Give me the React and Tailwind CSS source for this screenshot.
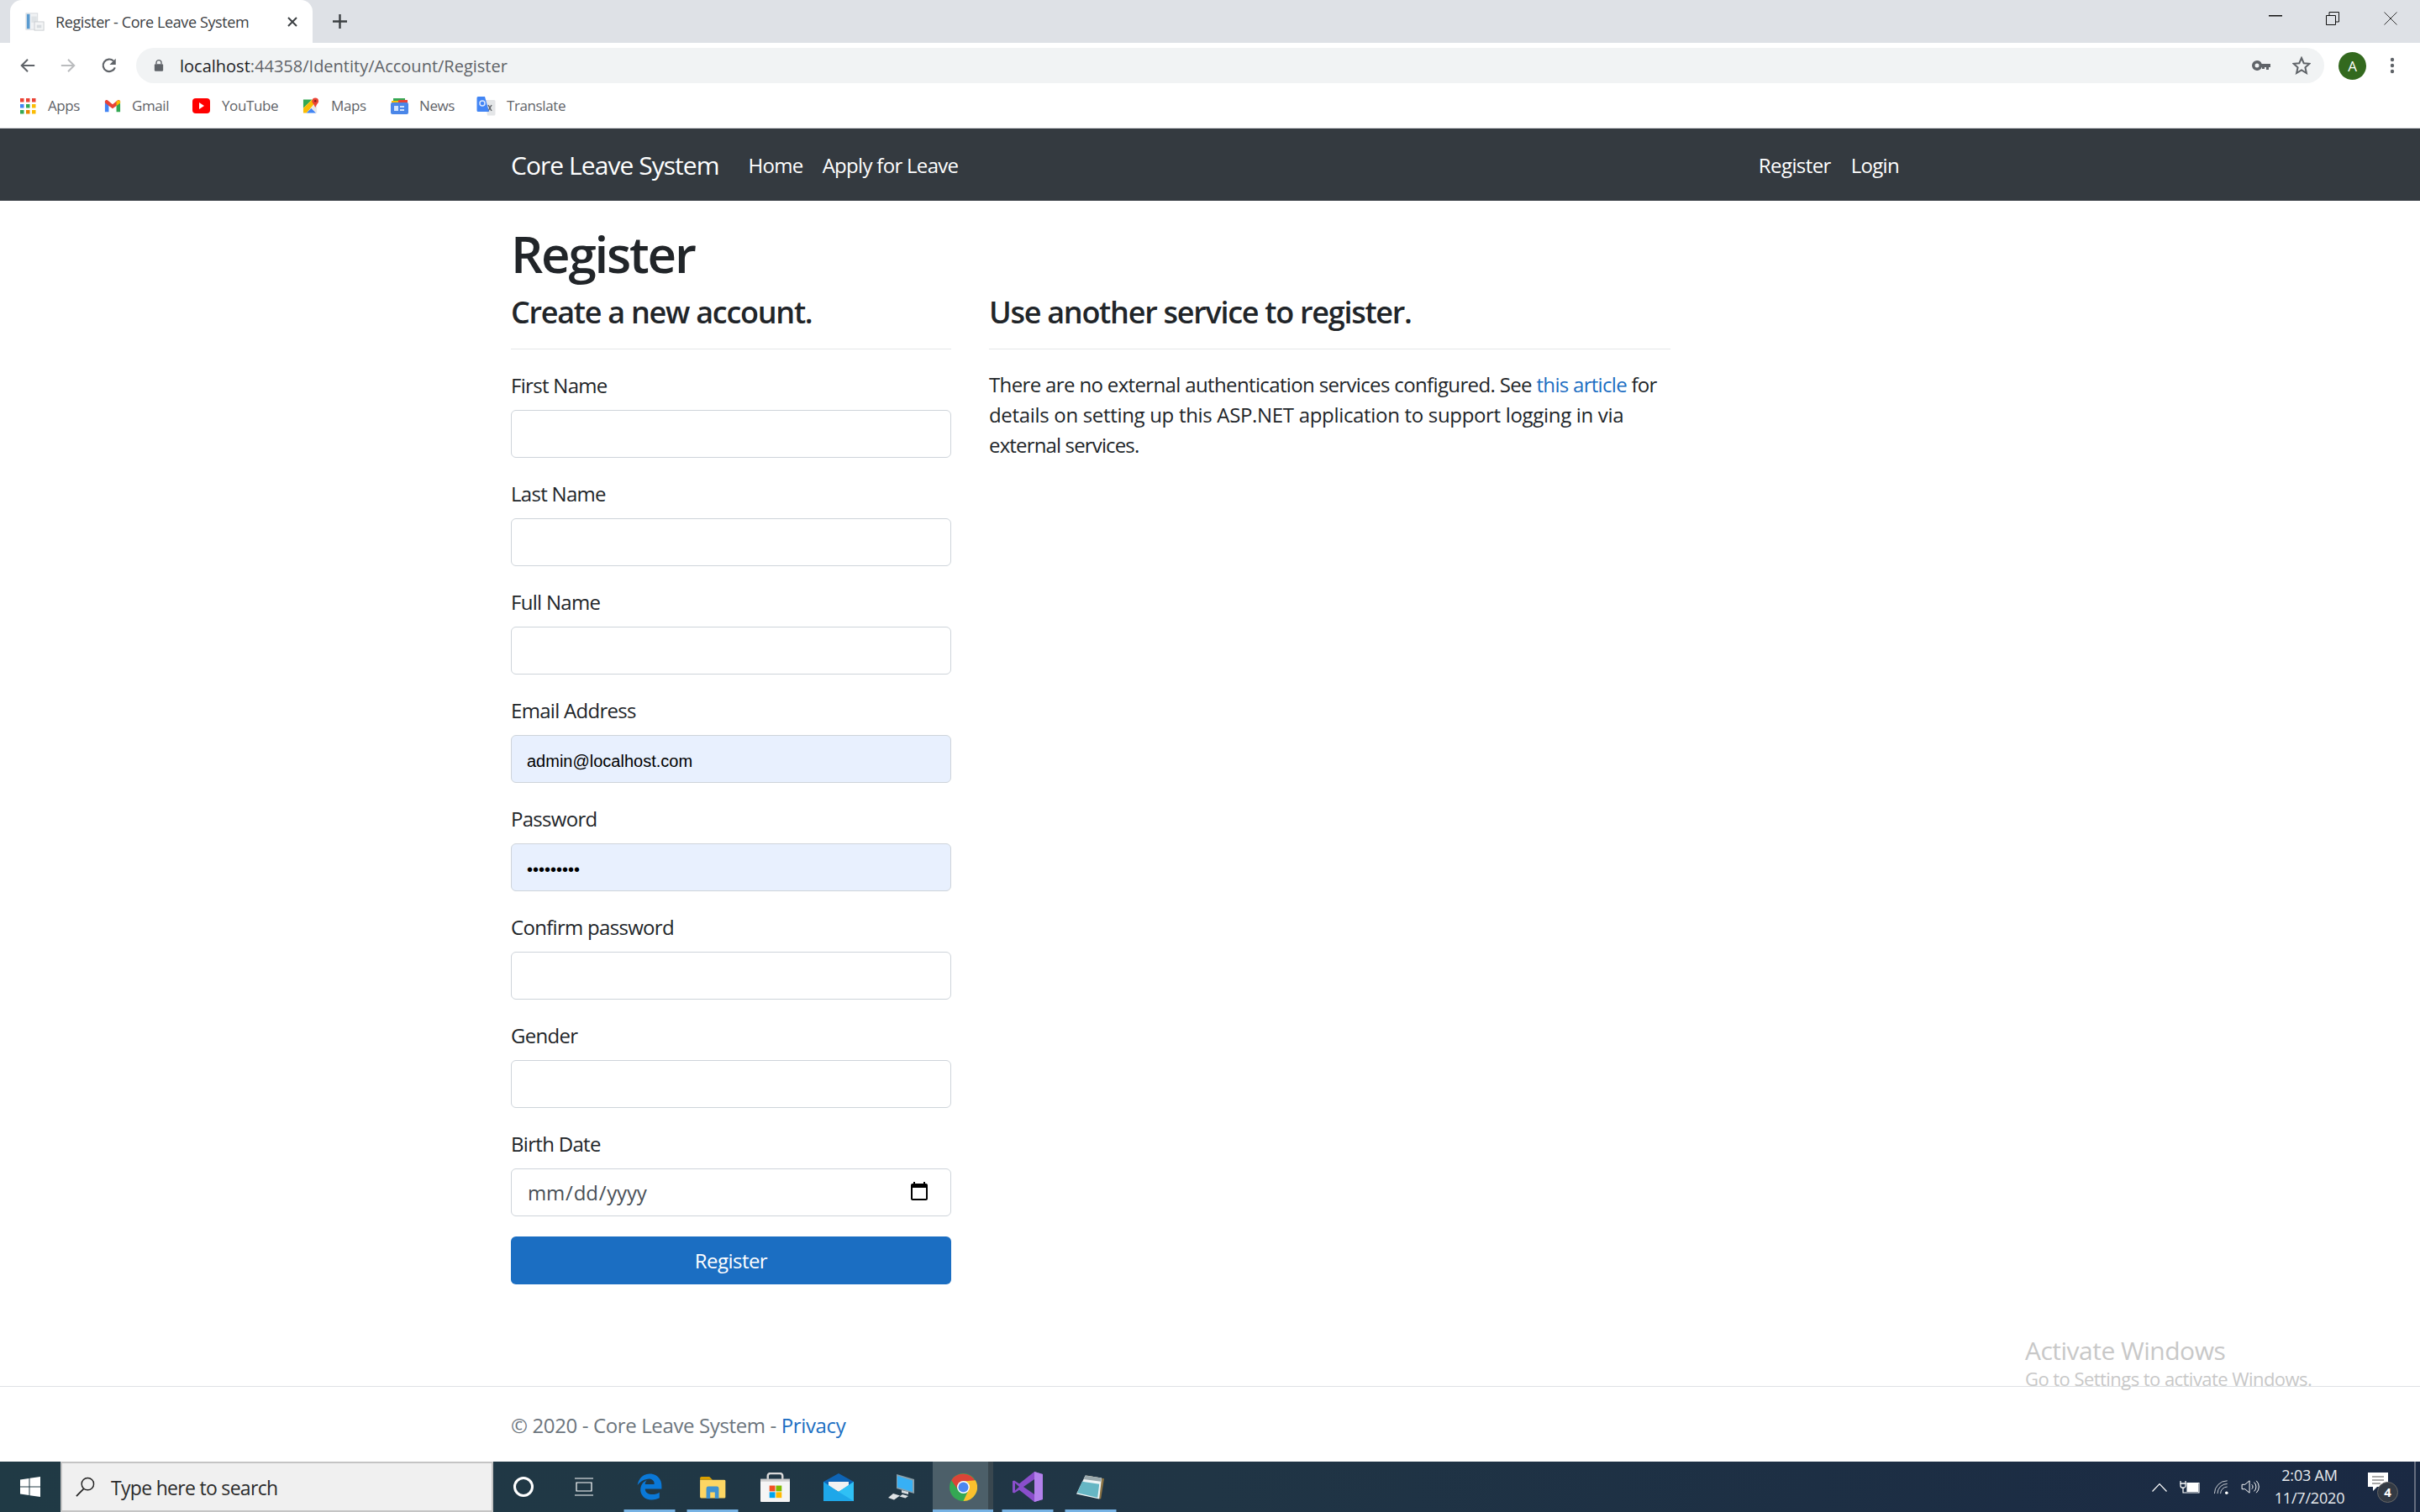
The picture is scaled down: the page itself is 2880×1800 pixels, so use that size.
import React from "react";
import { FaEdgeLegacy } from "react-icons/fa6";

const Field = ({ label, children }) => (
  <div className="mb-6">
    <label className="block h-9 mb-3 pt-px text-[#212529]">{label}</label>
    {children}
  </div>
);
const inputCls = "block w-full h-[57px] border border-[#ced4da] rounded-[6px] bg-white px-[18px] outline-none";

const Bookmark = ({ icon, label, iconW, textW }) => (
  <div className="flex items-center shrink-0">
    <div className="flex justify-center items-center" style={{ width: iconW }}>{icon}</div>
    <span className="text-[17px] text-[#5f6368] tracking-[-0.4px]" style={{ width: textW }}>{label}</span>
  </div>
);

const AppsIcon = () => (
  <svg width="20" height="20" viewBox="0 0 20 20">
    {[["#ea4335","#ea4335","#ea4335"],["#4285f4","#34a853","#fbbc05"],["#34a853","#ea8600","#fbbc05"]].map((row,i)=>row.map((c,j)=>(
      <rect key={i+"-"+j} x={1+j*7} y={1+i*7} width="4.5" height="4.5" fill={c}/>
    )))}
  </svg>
);
const GmailIcon = () => (
  <svg width="22" height="18" viewBox="0 0 22 18">
    <path d="M1 17V3l5 4v10z" fill="#4285f4"/>
    <path d="M21 17V3l-5 4v10z" fill="#34a853"/>
    <path d="M1 3c1-2 3-2 4-1l6 5 6-5c1-1 3-1 4 1v2l-5 4-5 3.500-5-3.500-5-4z" fill="#ea4335"/>
    <path d="M16 3l3-1.500c1 0 2 1 2 2v2l-5 3.500z" fill="#fbbc05"/>
  </svg>
);
const YoutubeIcon = () => (
  <svg width="21" height="18" viewBox="0 0 21 18">
    <rect width="21" height="18" rx="4" fill="#f00"/>
    <path d="M8 5l6 4-6 4z" fill="#fff"/>
  </svg>
);
const MapsIcon = () => (
  <svg width="21" height="22" viewBox="0 0 21 22">
    <path d="M1 3h11L1 14z" fill="#34a853"/>
    <path d="M1 14 12 3l4 4L5 20H1z" fill="#fbbc05"/>
    <path d="M5 20l6-6 6 6z" fill="#4285f4"/>
    <path d="M11 14l4-5 3 3v8h-1z" fill="#e8e8e8"/>
    <circle cx="16" cy="5" r="4" fill="#ea4335"/>
    <path d="M13 7l3 6 3-6z" fill="#ea4335"/>
    <circle cx="16" cy="5" r="1.300" fill="#7a2018"/>
  </svg>
);
const NewsIcon = () => (
  <svg width="23" height="23" viewBox="0 0 23 23">
    <path d="M4 3h14v6H4z" fill="#34a853"/>
    <path d="M2 6h12v6H2z" fill="#fbbc05"/>
    <path d="M10 5h11v8H10z" fill="#ea4335"/>
    <rect x="1" y="8" width="21" height="14" rx="2" fill="#4a86e8"/>
    <rect x="5" y="12" width="5" height="6" fill="#d2e3fc"/>
    <rect x="12" y="12" width="5" height="2" fill="#d2e3fc"/>
    <rect x="12" y="16" width="5" height="2" fill="#d2e3fc"/>
  </svg>
);
const TranslateIcon = () => (
  <svg width="23" height="24" viewBox="0 0 23 24">
    <path d="M10 5h11a1.500 1.500 0 0 1 1.500 1.500V22a1.500 1.500 0 0 1-1.500 1.500H13z" fill="#e4e6e8"/>
    <path d="M14 11l4 7M18 11l-4 7" stroke="#5f6368" strokeWidth="1.500"/>
    <path d="M2 1h8l5 18H2a1.500 1.500 0 0 1-1.500-1.500V2.500A1.500 1.500 0 0 1 2 1z" fill="#4285f4"/>
    <circle cx="7" cy="9" r="3" fill="none" stroke="#dbe7fd" strokeWidth="1.500"/>
  </svg>
);
const Favicon = () => (
  <svg width="23" height="23" viewBox="0 0 25 25">
    <rect x="1" y="2" width="15" height="21" fill="#f0f2f4" stroke="#d5d8dc"/>
    <rect x="2" y="3" width="4" height="19" fill="#5a9bd0"/>
    <rect x="8" y="6" width="7" height="8" fill="#dfe3e6"/>
    <rect x="12" y="13" width="12" height="11" fill="#f4f5f6" stroke="#c8ccd0"/>
    <rect x="15" y="17" width="6" height="4" fill="#d7dbdf"/>
  </svg>
);

const Cell = ({ w = 75, bar, children }) => (
  <div className="relative h-full flex items-center justify-center shrink-0" style={{ width: w }}>
    {children}
    {bar && <span className="absolute bottom-0 left-1/2 -translate-x-1/2 h-[3px] w-[61px] bg-[#76b2e4]" />}
  </div>
);

export default function App() {
  return (
    <div className="flex flex-col h-screen overflow-hidden bg-white font-['Open_Sans',sans-serif] text-[24px] leading-[36px] text-[#212529] relative tracking-[-0.7px]">
      {/* tab strip */}
      <div className="h-[51px] bg-[#dee1e6] flex items-end shrink-0 tracking-normal">
        <div className="ml-[12px] w-[360px] h-[51px] bg-white rounded-t-[14px] flex items-center pl-[18px] pr-[18px]">
          <Favicon />
          <span className="ml-[13px] text-[18px] text-[#3c4043] tracking-[-0.4px] leading-none flex-1 whitespace-nowrap">Register - Core Leave System</span>
          <svg width="12" height="12" viewBox="0 0 12 12"><path d="M1 1l10 10M11 1 1 11" stroke="#3c4043" strokeWidth="2"/></svg>
        </div>
        <div className="h-[51px] flex items-center ml-[24px]">
          <svg width="17" height="17" viewBox="0 0 17 17"><path d="M8.500 0v17M0 8.500h17" stroke="#3c4043" strokeWidth="2.400"/></svg>
        </div>
        <div className="ml-auto h-[51px] flex items-center pr-[27px] pb-[8px]">
          <svg width="16" height="2" viewBox="0 0 16 2" className="mb-[6px]"><rect width="16" height="1.500" fill="#111"/></svg>
          <svg width="16" height="16" viewBox="0 0 16 16" className="ml-[52px]"><path d="M.5 4.500h11v11H.5zM4 4.500V.5h11.500V12h-4" fill="none" stroke="#111"/></svg>
          <svg width="16" height="16" viewBox="0 0 16 16" className="ml-[53px]"><path d="M.5.500l15 15M15.500.500l-15 15" stroke="#333"/></svg>
        </div>
      </div>
      {/* toolbar */}
      <div className="h-[54px] bg-white flex items-center shrink-0 tracking-normal">
        <div className="w-[162px] flex items-center pl-[23px]">
          <svg width="20" height="20" viewBox="0 0 22 22"><path d="M20 11H3M11 3l-8 8 8 8" fill="none" stroke="#5f6368" strokeWidth="2.200"/></svg>
          <svg width="20" height="20" viewBox="0 0 22 22" className="ml-[28px]"><path d="M2 11h17M11 3l8 8-8 8" fill="none" stroke="#babcbe" strokeWidth="2.200"/></svg>
          <svg width="20" height="20" viewBox="0 0 22 22" className="ml-[29px]"><path d="M18.500 13.500A8 8 0 1 1 16.500 5" fill="none" stroke="#5f6368" strokeWidth="2.400"/><path d="M19.500 2v8h-8z" fill="#5f6368"/></svg>
        </div>
        <div className="flex-none w-[2604px] h-[42px] rounded-full bg-[#f1f3f4] flex items-center pl-[21px] pr-[16px]">
          <svg width="12" height="16" viewBox="0 0 14 18"><path d="M3.500 7V5a3.500 3.500 0 0 1 7 0v2" fill="none" stroke="#5f6368" strokeWidth="1.600"/><rect x="1" y="7" width="12" height="10" rx="1.500" fill="#5f6368"/></svg>
          <span className="ml-[19px] pt-[2px] text-[20px] text-[#5f6368] leading-none"><span className="text-[#202124]">localhost</span>:44358/Identity/Account/Register</span>
          <svg width="22" height="12" viewBox="0 0 22 12" className="ml-auto"><path d="M6 0a6 6 0 0 1 5.700 4H22v4h-2v3h-3V8h-2v2h-3V8h-.3A6 6 0 1 1 6 0zm0 3.500a2.500 2.500 0 1 0 0 5 2.500 2.500 0 0 0 0-5z" fill="#5f6368"/></svg>
          <svg width="22" height="22" viewBox="0 0 22 22" className="ml-[26px]"><path d="M11 2l2.700 6.200 6.800.6-5.100 4.500 1.500 6.700L11 16.500 5.100 20l1.500-6.700L1.500 8.800l6.800-.6z" fill="none" stroke="#5f6368" strokeWidth="2"/></svg>
        </div>
        <div className="ml-[17px] w-[33px] h-[33px] rounded-full bg-[#33691e] text-white text-[17px] flex items-center justify-center leading-none">A</div>
        <svg width="8" height="22" viewBox="0 0 8 22" className="ml-[27px]"><circle cx="4" cy="4" r="2.200" fill="#5f6368"/><circle cx="4" cy="11" r="2.200" fill="#5f6368"/><circle cx="4" cy="18" r="2.200" fill="#5f6368"/></svg>
      </div>
      {/* bookmarks */}
      <div className="h-[48px] bg-white flex items-center shrink-0 pl-[23px] pb-[6px] border-b border-[#d5d7da] tracking-normal">
        <Bookmark icon={<AppsIcon />} iconW={20} label={<span className="ml-[14px]">Apps</span>} textW={81} />
        <Bookmark icon={<GmailIcon />} iconW={20} label={<span className="ml-[13px]">Gmail</span>} textW={85} />
        <Bookmark icon={<YoutubeIcon />} iconW={21} label={<span className="ml-[14px]">YouTube</span>} textW={110} />
        <Bookmark icon={<MapsIcon />} iconW={20} label={<span className="ml-[14px]">Maps</span>} textW={83} />
        <Bookmark icon={<NewsIcon />} iconW={24} label={<span className="ml-[12px]">News</span>} textW={80} />
        <Bookmark icon={<TranslateIcon />} iconW={23} label={<span className="ml-[13px]">Translate</span>} textW={90} />
      </div>
      {/* navbar */}
      <nav className="h-[86px] bg-[#343a40] shrink-0 flex items-center pl-[608px] pr-[620px] pt-[2px] text-white">
        <span className="text-[30px] tracking-[-0.95px]">Core Leave System</span>
        <span className="ml-[35px]">Home</span>
        <span className="ml-[23px]">Apply for Leave</span>
        <span className="ml-auto tracking-[-0.6px]">Register</span>
        <span className="ml-[24px]">Login</span>
      </nav>
      {/* main */}
      <main className="flex-1 pl-[608px] pt-[27px]">
        <h1 className="text-[60px] leading-[72px] font-semibold tracking-[-2.2px] mb-[12px]">Register</h1>
        <div className="flex gap-[45px]">
          <form className="w-[524px]">
            <h4 className="text-[36px] leading-[43px] font-semibold tracking-[-1.28px] mb-[22px]">Create a new account.</h4>
            <hr className="border-t border-[#e4e6e8] mb-6" />
            <Field label="First Name"><input className={inputCls} readOnly /></Field>
            <Field label="Last Name"><input className={inputCls} readOnly /></Field>
            <Field label="Full Name"><input className={inputCls} readOnly /></Field>
            <Field label="Email Address">
              <input className={inputCls + " !bg-[#e8f0fe] pt-[5px] font-['Liberation_Sans',sans-serif] text-[20px] tracking-normal text-black"} value="admin@localhost.com" readOnly />
            </Field>
            <Field label="Password">
              <input type="password" className={inputCls + " !bg-[#e8f0fe] pt-[5px] font-['Liberation_Sans',sans-serif] text-[20px] tracking-normal text-black"} value="password1" readOnly />
            </Field>
            <Field label="Confirm password"><input className={inputCls} readOnly /></Field>
            <Field label="Gender"><input className={inputCls} readOnly /></Field>
            <Field label="Birth Date">
              <input type="date" className={inputCls + " text-[#495057] tracking-[-0.2px] [&::-webkit-calendar-picker-indicator]:w-[26px] [&::-webkit-calendar-picker-indicator]:h-[26px] [&::-webkit-calendar-picker-indicator]:mr-[4px] [&::-webkit-calendar-picker-indicator]:-mt-[2px]"} />
            </Field>
            <button type="button" className="block w-full h-[57px] rounded-[6px] bg-[#1b6ec2] text-white tracking-[-0.55px]">Register</button>
          </form>
          <div className="w-[811px]">
            <h4 className="text-[36px] leading-[43px] font-semibold tracking-[-1.28px] mb-[22px]">Use another service to register.</h4>
            <hr className="border-t border-[#e4e6e8] mb-6" />
            <p><span className="tracking-[-0.64px]">There are no external authentication services configured. See </span><a className="text-[#1b6ec2]">this article</a> for <span className="tracking-[-0.32px]">details on setting up this ASP.NET application to support logging in via </span><span className="tracking-[-0.85px]">external services.</span></p>
          </div>
        </div>
      </main>
      {/* footer */}
      <footer className="h-[90px] shrink-0 border-t border-[#dee2e6] pl-[608px] pt-[2px] flex items-center text-[#6c757d] tracking-[-0.37px]">
        <span>© 2020 - Core Leave System - <a className="text-[#1b6ec2]">Privacy</a></span>
      </footer>
      {/* taskbar */}
      <div className="h-[60px] shrink-0 flex items-center bg-gradient-to-r from-[#203a45] via-[#203545] to-[#1a2943] text-white tracking-normal">
        <div className="w-[72px] flex justify-center">
          <svg width="24" height="24" viewBox="0 0 24 24"><path d="M0 3.500l10.500-1.500v9.500H0zM11.500 1.800 24 0v11.500H11.500zM0 12.500h10.500V22L0 20.500zM11.500 12.500H24V24l-12.500-1.800z" fill="#fff"/></svg>
        </div>
        <div className="w-[515px] h-full bg-[#f0f0f0] border-2 border-[#c4c4c4] flex items-center pl-[16px]">
          <svg width="23" height="24" viewBox="0 0 24 25"><circle cx="15" cy="9" r="7.500" fill="none" stroke="#222" strokeWidth="1.500"/><path d="M10 15 1 24" stroke="#222" strokeWidth="1.800"/></svg>
          <span className="ml-[19px] pt-[2px] text-[23px] text-[#2b2b2b] tracking-[-0.7px] font-normal">Type here to search</span>
        </div>
        <div className="flex items-center h-full">
          <Cell w={72}><span className="w-[24px] h-[24px] rounded-full border-[3px] border-white" /></Cell>
          <Cell w={76}>
            <svg width="22" height="24" viewBox="0 0 22 24" className="-ml-[4px]"><path d="M0 2h22M2 7h18v10H2zM0 22h22M20 2" fill="none" stroke="#fff" strokeWidth="1.200"/></svg>
          </Cell>
          <Cell bar><FaEdgeLegacy size={32} color="#0a78d7" /></Cell>
          <Cell bar>
            <svg width="32" height="27" viewBox="0 0 34 29"><path d="M1 3a2 2 0 0 1 2-2h10l4 4h-16z" fill="#d99f00"/><path d="M1 5h31a1.500 1.500 0 0 1 1.500 1.500V27a1.500 1.500 0 0 1-1.500 1.500H3A2 2 0 0 1 1 27z" fill="#fdd663"/><path d="M9 29V16a2.500 2.500 0 0 1 2.500-2.500h11A2.500 2.500 0 0 1 25 16v13h-5v-8h-6v8z" fill="#3f93d1"/></svg>
          </Cell>
          <Cell>
            <svg width="35" height="35" viewBox="0 0 36 36"><path d="M9 8V4a3 3 0 0 1 3-3h12a3 3 0 0 1 3 3v4" fill="none" stroke="#d9d9d9" strokeWidth="2.500"/><path d="M0 8h36v27a1 1 0 0 1-1 1H1a1 1 0 0 1-1-1z" fill="#f5f5f5"/><rect y="8" width="36" height="3" fill="#cfcfcf"/><rect x="11" y="16" width="7" height="7" fill="#f25022"/><rect x="19" y="16" width="7" height="7" fill="#7fba00"/><rect x="11" y="24" width="7" height="7" fill="#00a4ef"/><rect x="19" y="24" width="7" height="7" fill="#ffb900"/></svg>
          </Cell>
          <Cell>
            <svg width="36" height="33" viewBox="0 0 36 33"><path d="M0 10 18 0l18 10v4H0z" fill="#0e64b5"/><path d="M6 10h24v5l-12 7-12-7z" fill="#f2f2f2"/><path d="M0 10l18 12 18-12v23H0z" fill="#1ea7e9"/><path d="M18 22 36 33V10z" fill="#2fc0f5"/></svg>
          </Cell>
          <Cell>
            <svg width="32" height="31" viewBox="0 0 32 31"><path d="M10 0l21 6v17L10 17z" fill="#8aa0ab"/><path d="M11 2l18 5.500V21L11 15.500z" fill="#37b0f5"/><path d="M16 19l8 2v3l-8-2z" fill="#d8dcdf"/><path d="M6 23l8 2.500-7 5-7-2.500z" fill="#dfe3e6"/><path d="M17 24l7 2-3.500 2.500-7-2z" fill="#dfe3e6"/></svg>
          </Cell>
          <div className="relative h-full w-[75px] shrink-0 flex items-center justify-center bg-[linear-gradient(to_right,#4c5f69_0,#4c5f69_66px,#39474f_66px,#39474f_72px,transparent_72px)]">
            <svg width="33" height="33" viewBox="-16.500 -16.500 33 33" className="-ml-[2px]">
              <circle r="16.500" fill="#34a853"/>
              <path d="M0-7H14.300A16.500 16.500 0 0 0-14.300-8.250L-6 3.500A7 7 0 0 1 0-7z" fill="#db4437"/>
              <path d="M14.300-8.250A16.500 16.500 0 0 1 0 16.500L6 3.500A7 7 0 0 0 0-7z" fill="#fbc02d"/>
              <circle r="7.500" fill="#fff"/>
              <circle r="6" fill="#4a87f0"/>
            </svg>
            <span className="absolute bottom-0 left-0 h-[3px] w-[72px] bg-[#76b2e4]" />
          </div>
          <Cell bar>
            <svg width="36" height="36" viewBox="0 0 36 48" preserveAspectRatio="none"><path d="M26 0l10 4v40l-10 4L8 29l-6 5-2-1V15l2-1 6 5z" fill="#8a4ecb"/><path d="M26 0l10 4v40l-10 4z" fill="#b381ec"/><path d="M26 12v24l-13-12z" fill="#26384a"/><path d="M3 18v12l5-6z" fill="#26384a"/></svg>
          </Cell>
          <Cell bar>
            <svg width="33" height="31" viewBox="0 0 34 42" preserveAspectRatio="none"><path d="M13 2l21 5-4 33-28-8z" fill="#8a7244"/><path d="M11 2l20 4-3 34L0 32z" fill="#eef4f6"/><path d="M11 2l20 4-1 6-21-4z" fill="#9aa9ad"/><path d="M7 12l21 4-2 22L1 30z" fill="#66b6c4"/></svg>
          </Cell>
        </div>
        <div className="ml-auto flex items-center h-full pr-[5px]">
          <svg width="18" height="11" viewBox="0 0 18 11"><path d="M.5 10.500l8.500-9 8.500 9" fill="none" stroke="#fff" strokeWidth="1.200"/></svg>
          <svg width="24" height="16" viewBox="0 0 24 16" className="ml-[15px]"><path d="M1 1v3h6V1M4 8v7h19V3.500H9v10h13" fill="none" stroke="#fff" strokeWidth="1.200"/><path d="M1 4v2.500a3 3 0 0 0 6 0V4z" fill="none" stroke="#fff" strokeWidth="1.200"/><rect x="9" y="3.500" width="13" height="10" fill="#fff"/></svg>
          <svg width="19" height="18" viewBox="0 0 20 20" className="ml-[16px]"><path d="M1 19A17 17 0 0 1 18 2M5 19A13 13 0 0 1 18 6M9 19a9 9 0 0 1 9-9" fill="none" stroke="#c8ccd2" strokeWidth="1.100"/><circle cx="17" cy="18" r="2" fill="#fff"/></svg>
          <svg width="22" height="18" viewBox="0 0 24 20" className="ml-[14px]"><path d="M1 7h4l6-5v16l-6-5H1z" fill="none" stroke="#fff" strokeWidth="1.100"/><path d="M14 7a4 4 0 0 1 0 6M17 4a8 8 0 0 1 0 12M20 2a11 11 0 0 1 0 16" fill="none" stroke="#fff" strokeWidth="1.100"/></svg>
          <div className="ml-[18px] w-[83px] flex flex-col items-center text-[18px] leading-[27px] text-[#e8ebee] tracking-[-0.2px] whitespace-nowrap">
            <span>2:03 AM</span>
            <span>11/7/2020</span>
          </div>
          <div className="relative ml-[28px] w-[36px] h-[36px] top-[5px]">
            <svg width="24" height="22" viewBox="0 0 24 22" className="absolute left-0 -top-[4px]"><path d="M0 0h24v17H11l-5 5v-5H0z" fill="#fff"/><path d="M5 5h14M5 9h14M5 13h10" stroke="#555" strokeWidth="1"/></svg>
            <span className="absolute left-[11px] top-[7px] w-[25px] h-[25px] rounded-full bg-[#333a44] border border-[#666] flex items-center justify-center text-[15px] font-bold leading-none">4</span>
          </div>
          <span className="ml-[19px] w-[2px] h-full bg-[#646d7e]" />
        </div>
      </div>
      {/* watermark */}
      <div className="absolute left-[2410px] top-[1590px] text-[#c8c8c8] tracking-[-0.5px] pointer-events-none">
        <div className="text-[30px] leading-[36px]">Activate Windows</div>
        <div className="text-[22px] leading-[30px] whitespace-nowrap tracking-[-0.55px]">Go to Settings to activate Windows.</div>
      </div>
    </div>
  );
}
